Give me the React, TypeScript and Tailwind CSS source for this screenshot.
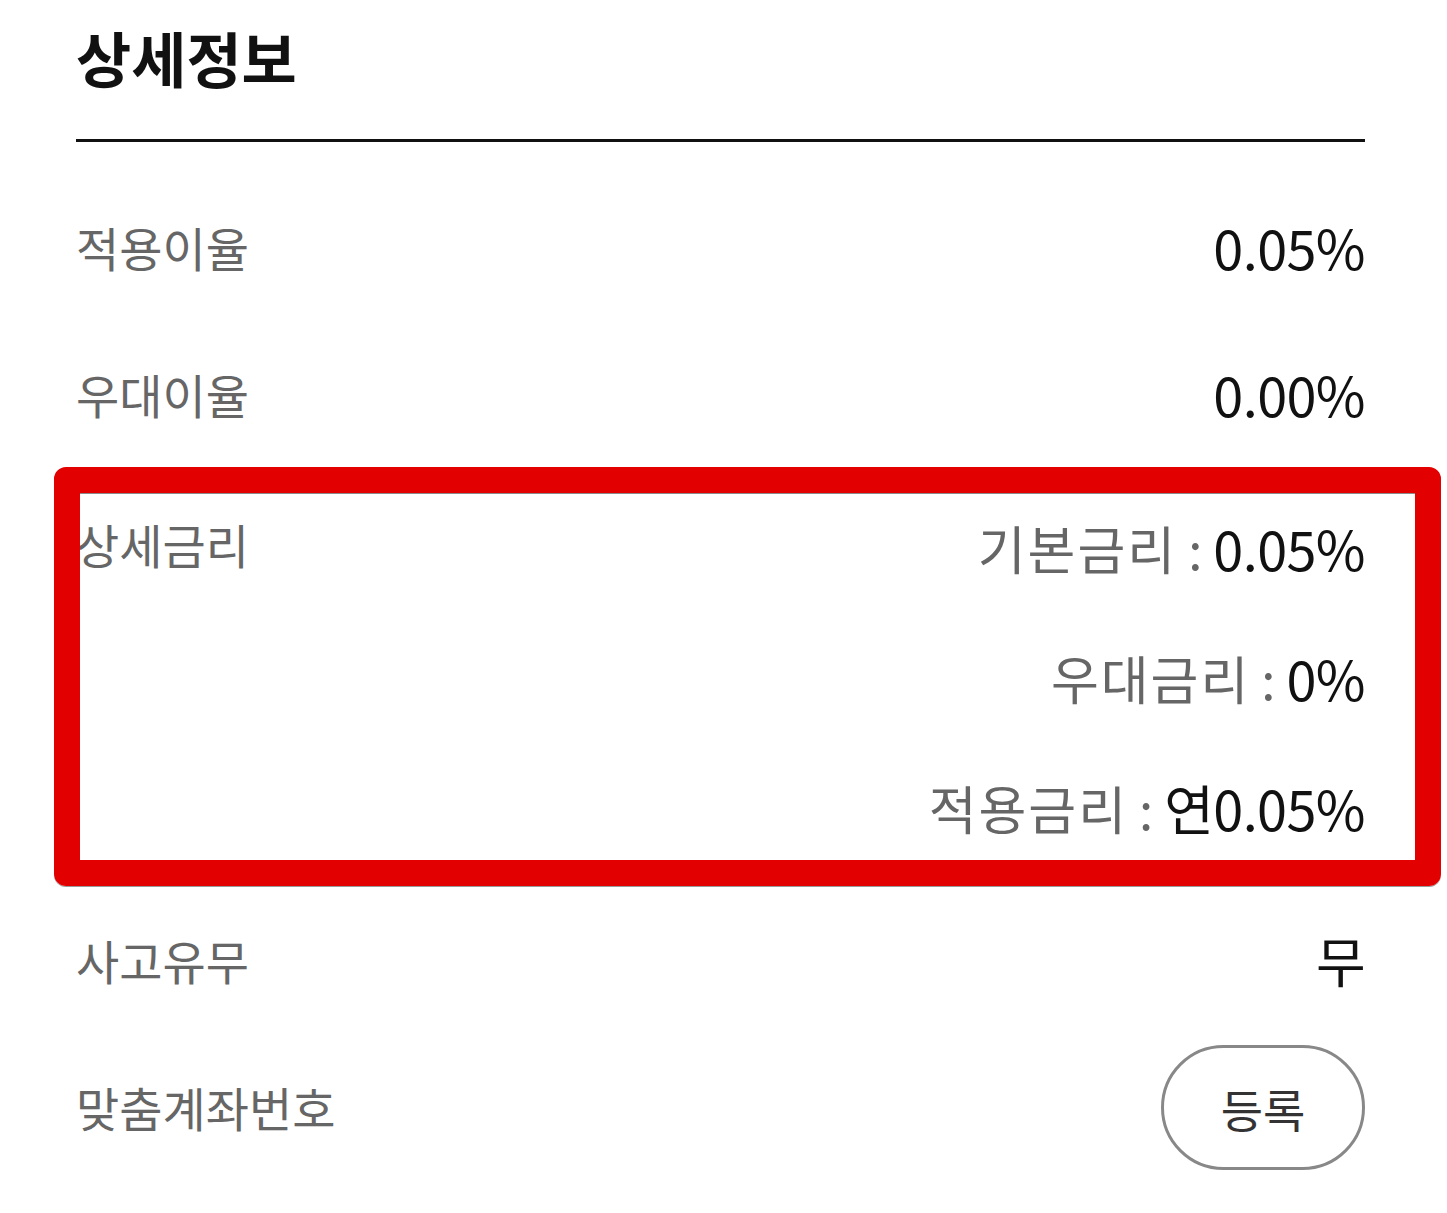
import React from "react";

const font = { fontFamily: '"Noto Sans CJK KR", "Noto Sans", sans-serif' };

function Row({ label, children }: { label: string; children: React.ReactNode }) {
  return (
    <div className="flex h-[147px] items-center justify-between">
      <span className="text-[47px] leading-none text-[#666666]">{label}</span>
      <span className="text-[54px] leading-none tracking-[-0.6px] text-[#111111]">{children}</span>
    </div>
  );
}

function SubLine({ label, value }: { label: string; value: string }) {
  return (
    <div className="flex h-[130px] items-center justify-end">
      <span className="text-[52px] leading-none tracking-[2px] text-[#666666]">{label}</span>
      <span className="ml-[11px] text-[51px] leading-none text-[#666666]">:</span>
      <span className="ml-[11px] text-[54px] leading-none tracking-[-0.6px] text-[#111111]">{value}</span>
    </div>
  );
}

export default function App() {
  return (
    <div className="relative h-[1213px] w-[1447px] overflow-hidden bg-white" style={font}>
      <div className="pl-[76px] pr-[82px]">
        <div className="flex h-[120px] items-center">
          <h1 className="-mt-[7px] text-[60px] font-bold leading-none text-[#111111]">상세정보</h1>
        </div>
        <div className="mt-[19px] h-[3px] bg-[#111111]" />
        <div className="pt-[31px]">
          <Row label="적용이율">0.05%</Row>
          <Row label="우대이율">0.00%</Row>
          <div className="flex pt-[16px]">
            <div className="flex h-[130px] items-center">
              <span className="-mt-[10px] text-[47px] leading-none text-[#666666]">상세금리</span>
            </div>
            <div className="flex-1">
              <SubLine label="기본금리" value="0.05%" />
              <SubLine label="우대금리" value="0%" />
              <SubLine label="적용금리" value="연0.05%" />
            </div>
          </div>
          <div className="mt-[13px]">
            <Row label="사고유무">무</Row>
            <div className="flex h-[147px] items-center justify-between">
              <span className="text-[47px] leading-none text-[#666666]">맞춤계좌번호</span>
              <button className="mt-[2px] flex h-[125px] w-[204px] items-center justify-center rounded-full border-[3px] border-[#888888] bg-white text-[46px] leading-none text-[#333333]">
                등록
              </button>
            </div>
          </div>
        </div>
      </div>
      <div className="pointer-events-none absolute left-[54px] top-[467px] h-[419px] w-[1387px] rounded-[12px] border-[26px] border-[#e30000] shadow-[inset_0_1px_0_#8a8a8a,0_1px_0_#9a9a9a]" />
    </div>
  );
}
